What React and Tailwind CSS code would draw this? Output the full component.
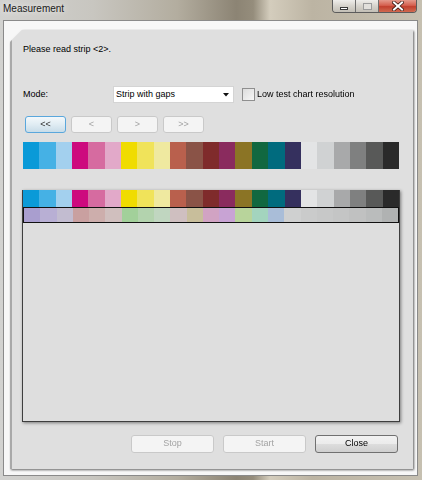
import React from "react";

const topRow = [
  "bg-[#0a9ad8]", "bg-[#45b1e5]", "bg-[#a3d0ee]",
  "bg-[#cd0a7e]", "bg-[#d66ba0]", "bg-[#e2a9c9]",
  "bg-[#f0dc00]", "bg-[#f0e35a]", "bg-[#efe9a0]",
  "bg-[#b9604d]", "bg-[#8a5347]", "bg-[#7f2b2b]",
  "bg-[#8a2b5e]", "bg-[#8b7425]", "bg-[#116840]", "bg-[#006b7e]", "bg-[#35305e]",
  "bg-[#e3e4e5]", "bg-[#d0d2d3]", "bg-[#a8a9aa]", "bg-[#7f8080]", "bg-[#585958]", "bg-[#2a2a2a]",
];

const measuredRow = [
  "bg-[#a99ecf]", "bg-[#b8afd4]", "bg-[#c2bcd0]",
  "bg-[#c9a0a0]", "bg-[#cdaeac]", "bg-[#d0bfbe]",
  "bg-[#a2d09a]", "bg-[#b3d3ae]", "bg-[#c0d6c0]",
  "bg-[#cfbfc0]", "bg-[#c8be9b]", "bg-[#d1a3c3]",
  "bg-[#c8a3d4]", "bg-[#b8d49b]", "bg-[#a3d4be]", "bg-[#a9bdd8]", "bg-[#cfd0d0]",
  "bg-[#cacbcb]", "bg-[#c7c8c8]", "bg-[#c4c5c5]", "bg-[#c0c1c1]", "bg-[#babcbc]", "bg-[#b0b2b2]",
];

function Strip({ colors, className }) {
  return (
    <div className={"flex " + className}>
      {colors.map((c, i) => (
        <div key={i} className={"flex-1 " + c} />
      ))}
    </div>
  );
}

function NavButton({ children, active }) {
  return active ? (
    <div className="flex h-[17px] w-[41px] items-center justify-center rounded-[3px] border border-[#5aa7dc] bg-[linear-gradient(#f3f8fb,#e0ecf3_50%,#c8dce8)] text-[9px] text-[#333]">
      {children}
    </div>
  ) : (
    <div className="flex h-[17px] w-[41px] items-center justify-center rounded-[3px] border border-[#c9c9c9] bg-[#f4f4f4] text-[9px] text-[#a3a3a3]">
      {children}
    </div>
  );
}

export default function App() {
  return (
    <div
      className="flex h-[480px] w-[422px] flex-col overflow-hidden bg-[linear-gradient(90deg,#d2d2d0_0%,#c8c6c0_22%,#b3ad9f_42%,#8c8474_56%,#958d7c_60%,#d4cdbd_64%,#bcb4a3_74%,#c6c0b1_100%)] text-[9px] text-black"
      style={{ fontFamily: '"Liberation Sans", Arial, sans-serif' }}
    >
      {/* Title bar */}
      <div className="flex h-[20px] shrink-0 items-start justify-between">
        <div className="pl-[3px] pt-[3px] text-[10px] leading-[12px] text-[#1b1b1b] [text-shadow:0_0_6px_rgba(255,255,255,0.9)]">
          Measurement
        </div>
        <div className="mr-[5px] flex h-[13px] overflow-hidden rounded-b-[4px] border border-t-0 border-[#5c5c5c]">
          <div className="flex w-[23px] items-center justify-center border-r border-[#6e6e6e] bg-[linear-gradient(#efeeeb,#d6d3cc_50%,#c3bfb6)]">
            <div className="mt-[4px] h-[3px] w-[8px] border border-[#3a3a3a] bg-white" />
          </div>
          <div className="flex w-[23px] items-center justify-center border-r border-[#6e6e6e] bg-[linear-gradient(#efeeeb,#d6d3cc_50%,#c3bfb6)]">
            <div className="h-[7px] w-[9px] border border-[#9c9c9c] bg-[#e2e0dc]" />
          </div>
          <div className="flex w-[37px] items-center justify-center bg-[linear-gradient(#e49a8c,#d5604f_45%,#c2402e_55%,#d06a50)]">
            <svg width="12" height="10" viewBox="0 0 12 10">
              <path d="M2 1.5 L10 8.5 M10 1.5 L2 8.5" stroke="#3d1a14" strokeWidth="3.6" strokeLinecap="square" />
              <path d="M2 1.5 L10 8.5 M10 1.5 L2 8.5" stroke="#ffffff" strokeWidth="2" strokeLinecap="square" />
            </svg>
          </div>
        </div>
      </div>

      {/* Client area */}
      <div className="mb-[4px] ml-[3px] mr-[4px] flex flex-1 flex-col border border-[#8a8a8a] bg-[#f7f7f7] pb-[6px] pl-[6px] pr-[4px] pt-[9px]">
        <div className="flex-1 [filter:drop-shadow(1px_1px_1px_rgba(0,0,0,0.6))]">
          <div className="flex h-full flex-col border-l-2 border-[#a9a9a9] bg-[#dfdfdf] pb-[16px] pl-[10px] pr-[13px] pt-[14px] [clip-path:polygon(12px_0,100%_0,100%_100%,0_100%,0_12px)]">
            <div className="pl-px leading-[11px]">Please read strip &lt;2&gt;.</div>

            {/* Mode row */}
            <div className="mt-[31px] flex h-[17px] items-center">
              <div className="w-[91px] pl-px">Mode:</div>
              <div className="flex h-[17px] w-[121px] items-center justify-between border border-[#d4d4d4] bg-white pl-[2px] pr-[4px]">
                <span>Strip with gaps</span>
                <svg width="6" height="4" viewBox="0 0 6 4">
                  <path d="M0 0 H6 L3 3.5 Z" fill="#111" />
                </svg>
              </div>
              <div className="ml-[8px] h-[13px] w-[13px] border border-[#8f8f8f] bg-[linear-gradient(135deg,#dcdcdc,#f7f7f7)]" />
              <div className="ml-[2px]">Low test chart resolution</div>
            </div>

            {/* Nav buttons */}
            <div className="ml-[3px] mt-[13px] flex gap-[5px]">
              <NavButton active>&lt;&lt;</NavButton>
              <NavButton>&lt;</NavButton>
              <NavButton>&gt;</NavButton>
              <NavButton>&gt;&gt;</NavButton>
            </div>

            {/* Reference strip */}
            <Strip colors={topRow} className="mx-px mt-[9px] h-[27px]" />

            {/* Measurement list */}
            <div className="mt-[21px] h-[232px] border-x border-b border-[#3e3e3e] bg-[#dedede] shadow-[1px_1px_3px_rgba(0,0,0,0.45)]">
              <Strip colors={topRow} className="h-[17px]" />
              <div className="h-[16px] border border-[#111]">
                <Strip colors={measuredRow} className="h-full" />
              </div>
            </div>

            {/* Bottom buttons */}
            <div className="mr-[2px] mt-[13px] flex justify-end gap-[9px]">
              <div className="flex h-[18px] w-[83px] items-center justify-center rounded-[3px] border border-[#c9c9c9] bg-[#f4f4f4] text-[#a3a3a3]">
                Stop
              </div>
              <div className="flex h-[18px] w-[83px] items-center justify-center rounded-[3px] border border-[#c9c9c9] bg-[#f4f4f4] text-[#a3a3a3]">
                Start
              </div>
              <div className="flex h-[18px] w-[83px] items-center justify-center rounded-[3px] border border-[#707070] bg-[linear-gradient(#f2f2f2,#ebebeb_50%,#dddddd_50%,#cfcfcf)] text-black">
                Close
              </div>
            </div>
          </div>
        </div>
      </div>
    </div>
  );
}
